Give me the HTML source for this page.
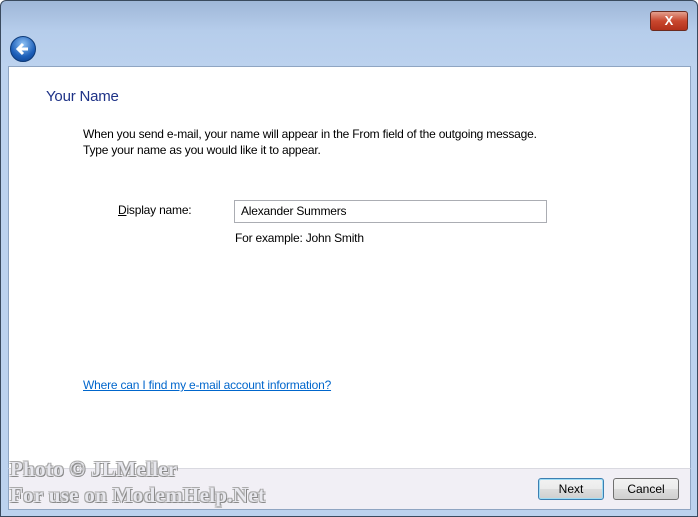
<!DOCTYPE html>
<html><head><style>
body{margin:0;width:698px;height:517px;overflow:hidden;font-family:"Liberation Sans",sans-serif;}
.frame{position:absolute;left:0;top:0;width:696px;height:515px;border:1px solid #3a4a5e;border-radius:6px 6px 0 0;background:linear-gradient(#9fb7d8 0,#b6cdeb 30px,#bcd2ee 66px,#bcd2ee);}
.content{position:absolute;left:8px;top:66px;width:681px;height:402px;background:#fff;border:1px solid #8fa5c2;border-bottom:none;}
.footer{position:absolute;left:8px;top:468px;width:681px;height:40px;background:#f1eff5;border:1px solid #8fa5c2;border-top:1px solid #d9d9e0;}
.close{position:absolute;left:650px;top:11px;width:36px;height:18px;border:1px solid #6b2b20;border-radius:3px;background:linear-gradient(#e3a08e,#c9472e 50%,#b2301a);color:#fff;font-weight:bold;font-size:13px;text-align:center;line-height:18px;}
.back{position:absolute;left:10px;top:36px;width:24px;height:24px;border-radius:50%;background:radial-gradient(circle at 50% 30%,#8fc2f5,#1d5fb9 60%,#0b3d8a);border:1px solid #0d3a78;}
.t{position:absolute;font-size:12px;color:#000;letter-spacing:-0.2px;}
.btn{position:absolute;top:478px;width:64px;height:20px;border:1px solid #707070;border-radius:3px;background:linear-gradient(#f2f2f2,#ebebeb 50%,#dddddd 51%,#cfcfcf);font-size:12px;text-align:center;line-height:20px;}
.wm{position:absolute;left:10px;font-family:"Liberation Serif",serif;font-weight:bold;font-size:21px;letter-spacing:0.3px;color:#e8e8ee;text-shadow:1px 1px 0 #888,-1px -1px 0 #aaa,1px -1px 0 #aaa,-1px 1px 0 #aaa;}
</style></head><body>
<div class="frame"></div>
<div class="close">X</div>
<div class="back"><svg width="24" height="24" viewBox="0 0 24 24"><path d="M17 12H8M12 7L7 12l5 5" stroke="#fff" stroke-width="3" fill="none"/></svg></div>
<div class="content"></div>
<div class="footer"></div>
<div class="t" style="left:46px;top:88px;font-size:15px;color:#1e3287">Your Name</div>
<div class="t" style="left:83px;top:127px">When you send e-mail, your name will appear in the From field of the outgoing message.</div>
<div class="t" style="left:83px;top:143px">Type your name as you would like it to appear.</div>
<div class="t" style="left:118px;top:203px"><u>D</u>isplay name:</div>
<div style="position:absolute;left:234px;top:200px;width:311px;height:21px;border:1px solid #abadb3;background:#fff"></div>
<div class="t" style="left:241px;top:204px">Alexander Summers</div>
<div class="t" style="left:235px;top:231px">For example: John Smith</div>
<div class="t" style="left:83px;top:378px;color:#0066cc;text-decoration:underline">Where can I find my e-mail account information?</div>
<div class="wm" style="top:457px">Photo © JLMeller</div>
<div class="wm" style="top:483px">For use on ModemHelp.Net</div>
<div class="btn" style="left:538px;border-color:#3c7fb1;box-shadow:inset 0 0 0 1px #9fdcf5">Next</div>
<div class="btn" style="left:613px">Cancel</div>
</body></html>
